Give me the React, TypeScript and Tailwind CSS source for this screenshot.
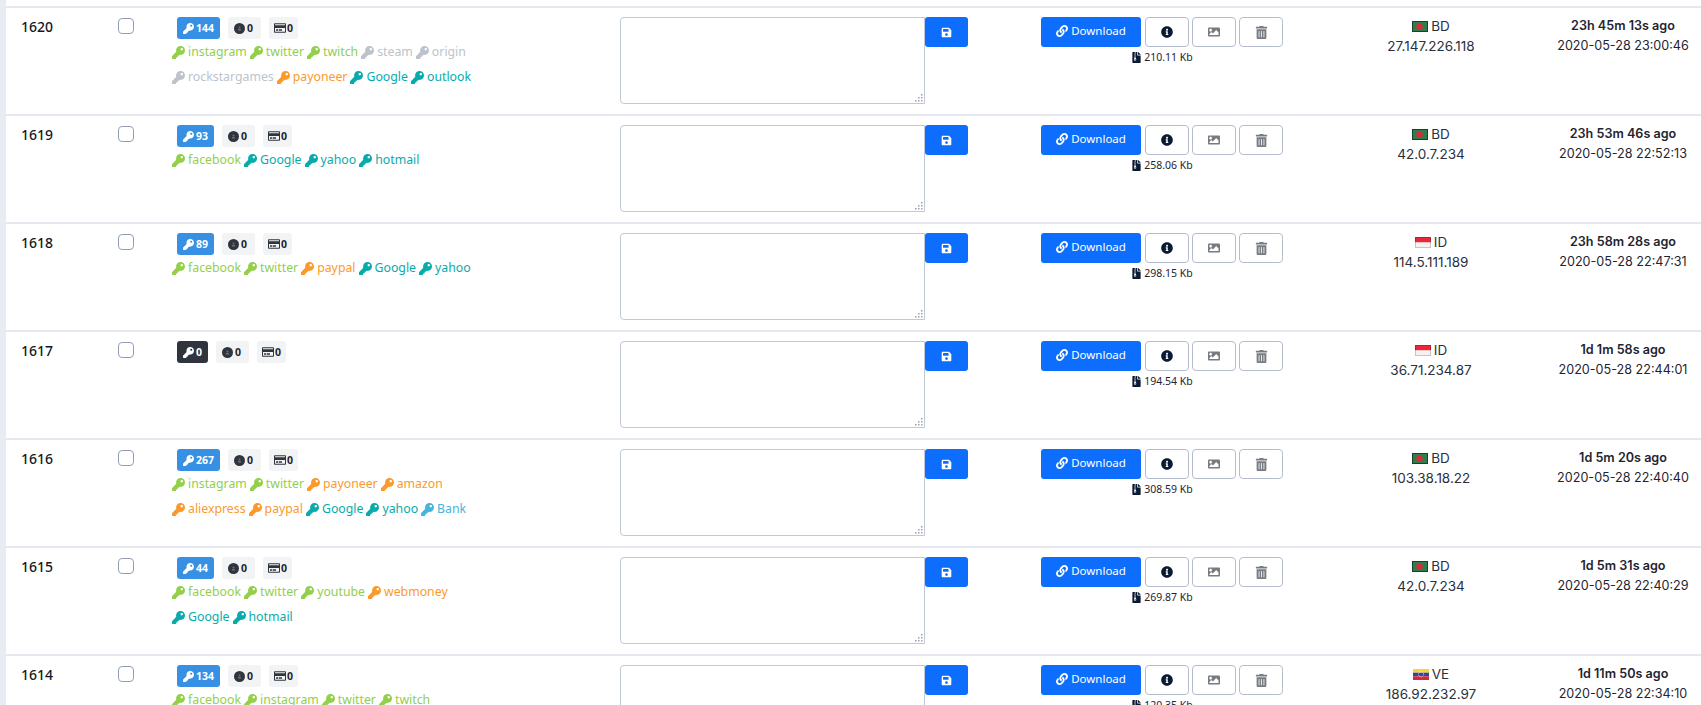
import React from 'react';
import { FaKey, FaSave, FaLink, FaInfoCircle, FaImage, FaTrashAlt, FaFileArchive, FaRegCreditCard } from 'react-icons/fa';

type Tag = [string, string];

const GREEN = 'text-[#93cf4b]';
const GREY = 'text-[#bcc3cc]';
const ORANGE = 'text-[#fb9a2c]';
const TEAL = 'text-[#08abab]';
const SKY = 'text-[#45b5de]';

interface Row {
  id: number;
  keys: number;
  rows: Tag[][];
  size: string;
  country: string;
  ip: string;
  ago: string;
  date: string;
}

const data: Row[] = [
  {
    id: 1620, keys: 144, size: '210.11 Kb', country: 'BD', ip: '27.147.226.118', ago: '23h 45m 13s ago', date: '2020-05-28 23:00:46',
    rows: [
      [['instagram', GREEN], ['twitter', GREEN], ['twitch', GREEN], ['steam', GREY], ['origin', GREY]],
      [['rockstargames', GREY], ['payoneer', ORANGE], ['Google', TEAL], ['outlook', TEAL]],
    ],
  },
  {
    id: 1619, keys: 93, size: '258.06 Kb', country: 'BD', ip: '42.0.7.234', ago: '23h 53m 46s ago', date: '2020-05-28 22:52:13',
    rows: [[['facebook', GREEN], ['Google', TEAL], ['yahoo', TEAL], ['hotmail', TEAL]]],
  },
  {
    id: 1618, keys: 89, size: '298.15 Kb', country: 'ID', ip: '114.5.111.189', ago: '23h 58m 28s ago', date: '2020-05-28 22:47:31',
    rows: [[['facebook', GREEN], ['twitter', GREEN], ['paypal', ORANGE], ['Google', TEAL], ['yahoo', TEAL]]],
  },
  { id: 1617, keys: 0, size: '194.54 Kb', country: 'ID', ip: '36.71.234.87', ago: '1d 1m 58s ago', date: '2020-05-28 22:44:01', rows: [] },
  {
    id: 1616, keys: 267, size: '308.59 Kb', country: 'BD', ip: '103.38.18.22', ago: '1d 5m 20s ago', date: '2020-05-28 22:40:40',
    rows: [
      [['instagram', GREEN], ['twitter', GREEN], ['payoneer', ORANGE], ['amazon', ORANGE]],
      [['aliexpress', ORANGE], ['paypal', ORANGE], ['Google', TEAL], ['yahoo', TEAL], ['Bank', SKY]],
    ],
  },
  {
    id: 1615, keys: 44, size: '269.87 Kb', country: 'BD', ip: '42.0.7.234', ago: '1d 5m 31s ago', date: '2020-05-28 22:40:29',
    rows: [
      [['facebook', GREEN], ['twitter', GREEN], ['youtube', GREEN], ['webmoney', ORANGE]],
      [['Google', TEAL], ['hotmail', TEAL]],
    ],
  },
  {
    id: 1614, keys: 134, size: '120.35 Kb', country: 'VE', ip: '186.92.232.97', ago: '1d 11m 50s ago', date: '2020-05-28 22:34:10',
    rows: [[['facebook', GREEN], ['instagram', GREEN], ['twitter', GREEN], ['twitch', GREEN]]],
  },
];

const Flag = ({ code }: { code: string }) => {
  if (code === 'BD') {
    return (
      <svg width="16" height="11" viewBox="0 0 16 11" className="shrink-0">
        <rect x="0.5" y="0.5" width="15" height="10" fill="#2f7d4a" stroke="#14442a" />
        <circle cx="7.5" cy="5.5" r="3.2" fill="#e0283c" />
      </svg>
    );
  }
  if (code === 'ID') {
    return (
      <svg width="16" height="11" viewBox="0 0 16 11" className="shrink-0">
        <rect width="16" height="5.5" fill="#e8273a" />
        <rect y="5.5" width="16" height="5.5" fill="#f6f0f0" />
        <rect x="0.5" y="0.5" width="15" height="10" fill="none" stroke="#000" strokeOpacity="0.18" />
      </svg>
    );
  }
  return (
    <svg width="16" height="11" viewBox="0 0 16 11" className="shrink-0">
      <rect width="16" height="3.7" fill="#f9d33c" />
      <rect y="3.7" width="16" height="3.6" fill="#2b4aa0" />
      <rect y="7.3" width="16" height="3.7" fill="#d8283c" />
      <circle cx="8" cy="5.3" r="2.6" fill="none" stroke="#fff" strokeWidth="0.8" strokeDasharray="0.8 0.8" />
    </svg>
  );
};

const Coin = () => (
  <svg width="11" height="11" viewBox="0 0 11 11" className="shrink-0">
    <circle cx="5.5" cy="5.5" r="5.5" fill="#2f343d" />
    <circle cx="5.5" cy="4.4" r="1" fill="#6b7079" />
    <rect x="3.9" y="6" width="3.2" height="1.6" rx="0.5" fill="#6b7079" />
  </svg>
);

const Badges = ({ keys }: { keys: number }) => (
  <div className="flex h-[22px] items-center gap-2 text-[10.5px] font-bold leading-none">
    <span className={`flex h-[22px] items-center gap-[2px] rounded-[3px] px-[6px] text-white ${keys === 0 ? 'bg-[#2f343d]' : 'bg-[#3790e3]'}`}>
      <FaKey className="text-[11px]" />
      {keys}
    </span>
    <span className="flex h-[22px] items-center gap-[2px] rounded-[3px] bg-[#f2f3f5] pl-[6px] pr-[8px] text-[#1f2430]">
      <Coin />0
    </span>
    <span className="flex h-[22px] items-center gap-[1px] rounded-[3px] bg-[#f2f3f5] px-[5px] text-[#1f2430]">
      <FaRegCreditCard className="text-[12px] text-[#2f343d]" />0
    </span>
  </div>
);

const TableRow = ({ row }: { row: Row }) => (
  <div className="grid h-[108px] grid-cols-[112px_54px_448px_421px_293px_190px_1fr] border-t-2 border-[#e6e7ef] pt-[9px]">
    <div className="pl-[15px] text-[14px] font-medium leading-[20px] text-[#101828]">{row.id}</div>

    <div className="pt-[1px]">
      <div className="h-4 w-4 rounded-[4px] border border-[#939fb5] bg-white" />
    </div>

    <div>
      <div className="pl-[5px]">
        <Badges keys={row.keys} />
      </div>
      <div className="mt-[1px]">
        {row.rows.map((tags, i) => (
          <div key={i} className="flex h-[25px] items-center gap-[3px]">
            {tags.map(([name, color]) => (
              <span key={name} className={`flex items-center gap-[3px] text-[12.3px] ${color}`}>
                <FaKey className="text-[13px]" />
                {name}
              </span>
            ))}
          </div>
        ))}
      </div>
    </div>

    <div className="flex items-start">
      <div className="relative h-[87px] w-[305px]">
        <textarea className="block h-full w-full resize-none rounded-l-[4px] border border-[#c0c8d6] bg-white" />
        <svg width="8" height="8" viewBox="0 0 8 8" className="absolute bottom-[2px] right-[2px]" fill="#9aa0a8">
          <rect x="6" y="0" width="1.5" height="1.5" />
          <rect x="3" y="3" width="1.5" height="1.5" />
          <rect x="6" y="3" width="1.5" height="1.5" />
          <rect x="0" y="6" width="1.5" height="1.5" />
          <rect x="3" y="6" width="1.5" height="1.5" />
          <rect x="6" y="6" width="1.5" height="1.5" />
        </svg>
      </div>
      <button className="flex h-[30px] w-[43px] items-center justify-center rounded-[3px] bg-[#0d6efd] text-[11px] text-white">
        <FaSave />
      </button>
    </div>

    <div className="flex flex-col">
      <div className="flex gap-[3px]">
        <button className="mr-[1px] flex h-[30px] w-[100px] items-center justify-center gap-[3px] rounded-[3px] bg-[#0d6efd] pb-[2px] text-[11.5px] text-white">
          <FaLink className="text-[12px]" />
          Download
        </button>
        <button className="flex h-[30px] w-[44px] items-center justify-center rounded-[4px] border border-[#b5bdcc] bg-white text-[12px] text-[#0b1a33]">
          <FaInfoCircle />
        </button>
        <button className="flex h-[30px] w-[44px] items-center justify-center rounded-[4px] border border-[#b5bdcc] bg-white text-[12px] text-[#777b82]">
          <FaImage />
        </button>
        <button className="flex h-[30px] w-[44px] items-center justify-center rounded-[4px] border border-[#b5bdcc] bg-white text-[13px] text-[#777b82]">
          <FaTrashAlt />
        </button>
      </div>
      <div className="mt-[3px] flex w-[242px] items-center justify-center gap-[2px] text-[10.5px] leading-[14px] text-[#1f2430]">
        <FaFileArchive className="text-[11px] text-[#0b1a33]" />
        {row.size}
      </div>
    </div>

    <div className="-mt-[1px] pl-[4px] text-center font-['Inter',sans-serif] leading-[20px] text-[#2a3040]">
      <div className="flex h-[20px] items-center justify-center gap-[3px] text-[13.5px]">
        <Flag code={row.country} />
        {row.country}
      </div>
      <div className="text-[13.5px]">{row.ip}</div>
    </div>

    <div className="-mt-[1px] pl-[21px] text-center font-['Inter',sans-serif] text-[12.6px] leading-[20px] text-[#1f2430]">
      <div className="font-semibold">{row.ago}</div>
      <div>{row.date}</div>
    </div>
  </div>
);

export default function App() {
  return (
    <div className="h-[705px] overflow-hidden bg-white font-['Noto_Sans','Open_Sans',sans-serif]">
      <div className="h-full border-l-[6px] border-[#e9ebf3] pt-[6px]">
        {data.map((row) => (
          <TableRow key={row.id} row={row} />
        ))}
      </div>
    </div>
  );
}
